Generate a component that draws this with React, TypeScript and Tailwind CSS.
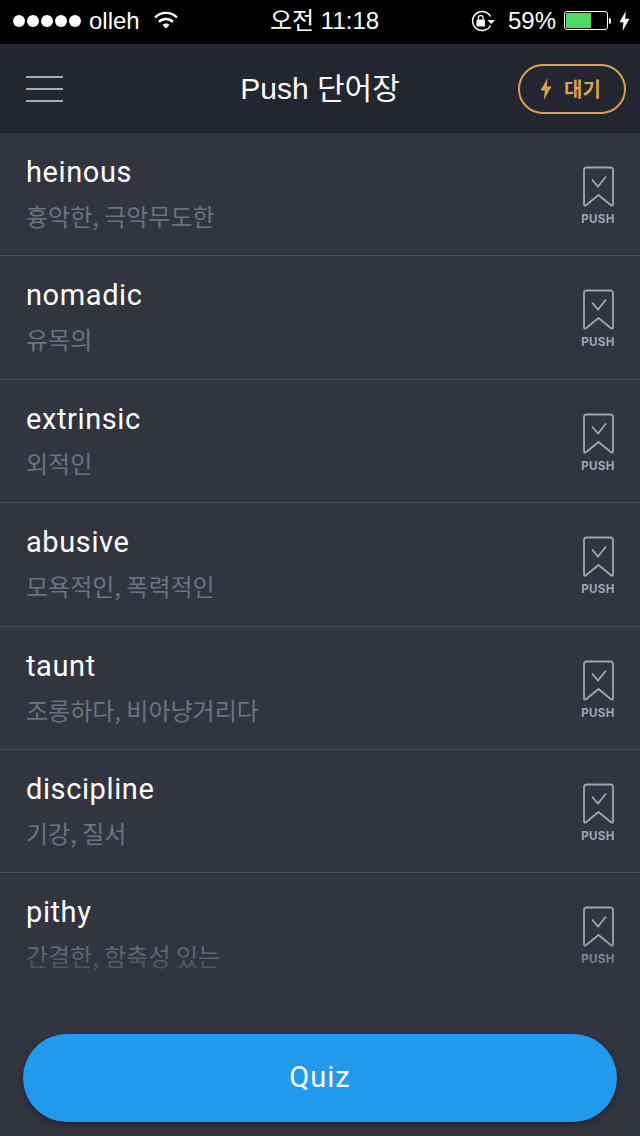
import React from 'react'

const words = [
  { word: 'heinous', meaning: '흉악한, 극악무도한' },
  { word: 'nomadic', meaning: '유목의' },
  { word: 'extrinsic', meaning: '외적인' },
  { word: 'abusive', meaning: '모욕적인, 폭력적인' },
  { word: 'taunt', meaning: '조롱하다, 비아냥거리다' },
  { word: 'discipline', meaning: '기강, 질서' },
  { word: 'pithy', meaning: '간결한, 함축성 있는' },
]

const Bolt = ({ className }: { className: string }) => (
  <svg viewBox="0 0 12 22" className={className} fill="currentColor">
    <path d="M7.5 0 L0.5 12.5 H4.8 L3.8 22 L11.5 8.5 H6.8 Z" />
  </svg>
)

const StatusBar = () => (
  <div className="h-[44px] bg-black text-white relative flex items-center justify-between pl-[13px] pr-[10px] pb-[3px] text-[24px] font-['Liberation_Sans','Noto_Sans_CJK_KR',sans-serif] shrink-0">
    <div className="flex items-center">
      <div className="flex gap-[2px] mr-[8px]">
        {[0, 1, 2, 3, 4].map((i) => (
          <span key={i} className="w-[12px] h-[12px] rounded-full bg-white" />
        ))}
      </div>
      <span className="leading-none">olleh</span>
      <svg viewBox="0 0 24 18" className="w-[24px] h-[18px] ml-[14px] mb-[2px]" fill="none" stroke="white" strokeWidth="2.4">
        <path d="M1 6.5 A15.5 15.5 0 0 1 23 6.5" />
        <path d="M5 10.8 A10 10 0 0 1 19 10.8" />
        <path d="M8.5 14 L12 17.5 L15.5 14 A5 5 0 0 0 8.5 14 Z" fill="white" stroke="none" />
      </svg>
    </div>
    <div className="absolute left-[270px] leading-none">오전 11:18</div>
    <div className="flex items-center">
      <svg viewBox="0 0 26 22" className="w-[26px] h-[22px] mr-[12px]" fill="none">
        <path d="M20.5 6.5 A9.5 9.5 0 1 0 20.5 15.5" stroke="white" strokeWidth="1.5" />
        <path d="M17.5 10 H25 L21.2 14 Z" fill="white" />
        <rect x="6.5" y="9.5" width="8.5" height="7" rx="1" fill="white" />
        <path d="M8.3 9.5 V7.5 A2.5 2.5 0 0 1 13.2 7.5 V9.5" stroke="white" strokeWidth="1.3" />
      </svg>
      <span className="leading-none mr-[8px]">59%</span>
      <div className="w-[44px] h-[19px] border border-white rounded-[3px] p-[1px]">
        <div className="w-[25px] h-full bg-[#4cd964]" />
      </div>
      <span className="w-[2px] h-[6px] bg-white rounded-r-sm ml-[1px]" />
      <Bolt className="w-[11px] h-[20px] ml-[8px] text-white" />
    </div>
  </div>
)

const Header = () => (
  <div className="h-[89px] bg-[#232531] flex items-center justify-between pl-[26px] pr-[14px] shrink-0 relative">
    <div className="w-[37px] flex flex-col gap-[10px]">
      <span className="h-[2px] bg-[#a7abb8]" />
      <span className="h-[2px] bg-[#a7abb8]" />
      <span className="h-[2px] bg-[#a7abb8]" />
    </div>
    <h1 className="absolute left-0 right-0 text-center text-[30px] leading-none text-white font-['Liberation_Sans','Noto_Sans_CJK_KR',sans-serif]">
      Push 단어장
    </h1>
    <div className="w-[108px] h-[50px] rounded-full border-2 border-[#d9a250] flex items-center justify-center gap-[12px] pr-[3px] text-[#d9a250] font-['Noto_Sans_CJK_KR',sans-serif] font-bold text-[20px]">
      <Bolt className="w-[12px] h-[22px]" />
      <span>대기</span>
    </div>
  </div>
)

const PushMark = () => (
  <div className="flex flex-col items-center text-[#a2a6b3] w-[40px]">
    <svg viewBox="0 0 32 42" className="w-[32px] h-[42px]" fill="none" stroke="currentColor" strokeWidth="1.8">
      <path d="M4.5 1.5 H28.5 A2.5 2.5 0 0 1 31 4 V38 Q31 40.5 29 39.2 L16.5 29 L4 39.2 Q2 40.5 2 38 V4 A2.5 2.5 0 0 1 4.5 1.5 Z" strokeLinejoin="round" />
      <path d="M10 13.5 L16 20.5 L24 10.5" />
    </svg>
    <span className="text-[11.5px] leading-none font-bold tracking-[0.4px] mt-[6px] font-['Inter',sans-serif]">PUSH</span>
  </div>
)

export default function App() {
  return (
    <div className="w-[640px] h-[1136px] bg-[#32343f] flex flex-col overflow-hidden relative">
      <StatusBar />
      <Header />
      <div className="flex flex-col">
        {words.map((item, i) => (
          <div
            key={item.word}
            className={`h-[123.4px] flex justify-between pl-[26px] pr-[22px] ${i < words.length - 1 ? 'border-b border-[#494b56]' : ''}`}
          >
            <div className="pt-[22px]">
              <div className="text-[29px] leading-[34px] tracking-[0.6px] text-white font-['Roboto','Liberation_Sans',sans-serif]">{item.word}</div>
              <div className="text-[24px] leading-[34px] mt-[10px] text-[#6d727f] font-['Noto_Sans_CJK_KR',sans-serif]">{item.meaning}</div>
            </div>
            <div className="pt-[33px]">
              <PushMark />
            </div>
          </div>
        ))}
      </div>
      {/* fade + quiz button over the end of the list */}
      <div className="absolute left-0 right-0 bottom-0 h-[196px] bg-gradient-to-b from-[#32343f00] to-[#32343f] to-[30%] flex items-end justify-center pb-[14px]">
        <button className="w-[594px] h-[88px] rounded-full bg-[#219aee] text-white text-[29px] tracking-[1px] font-['Roboto',sans-serif] shadow-[0_2px_6px_rgba(0,0,0,0.35)]">
          Quiz
        </button>
      </div>
    </div>
  )
}
